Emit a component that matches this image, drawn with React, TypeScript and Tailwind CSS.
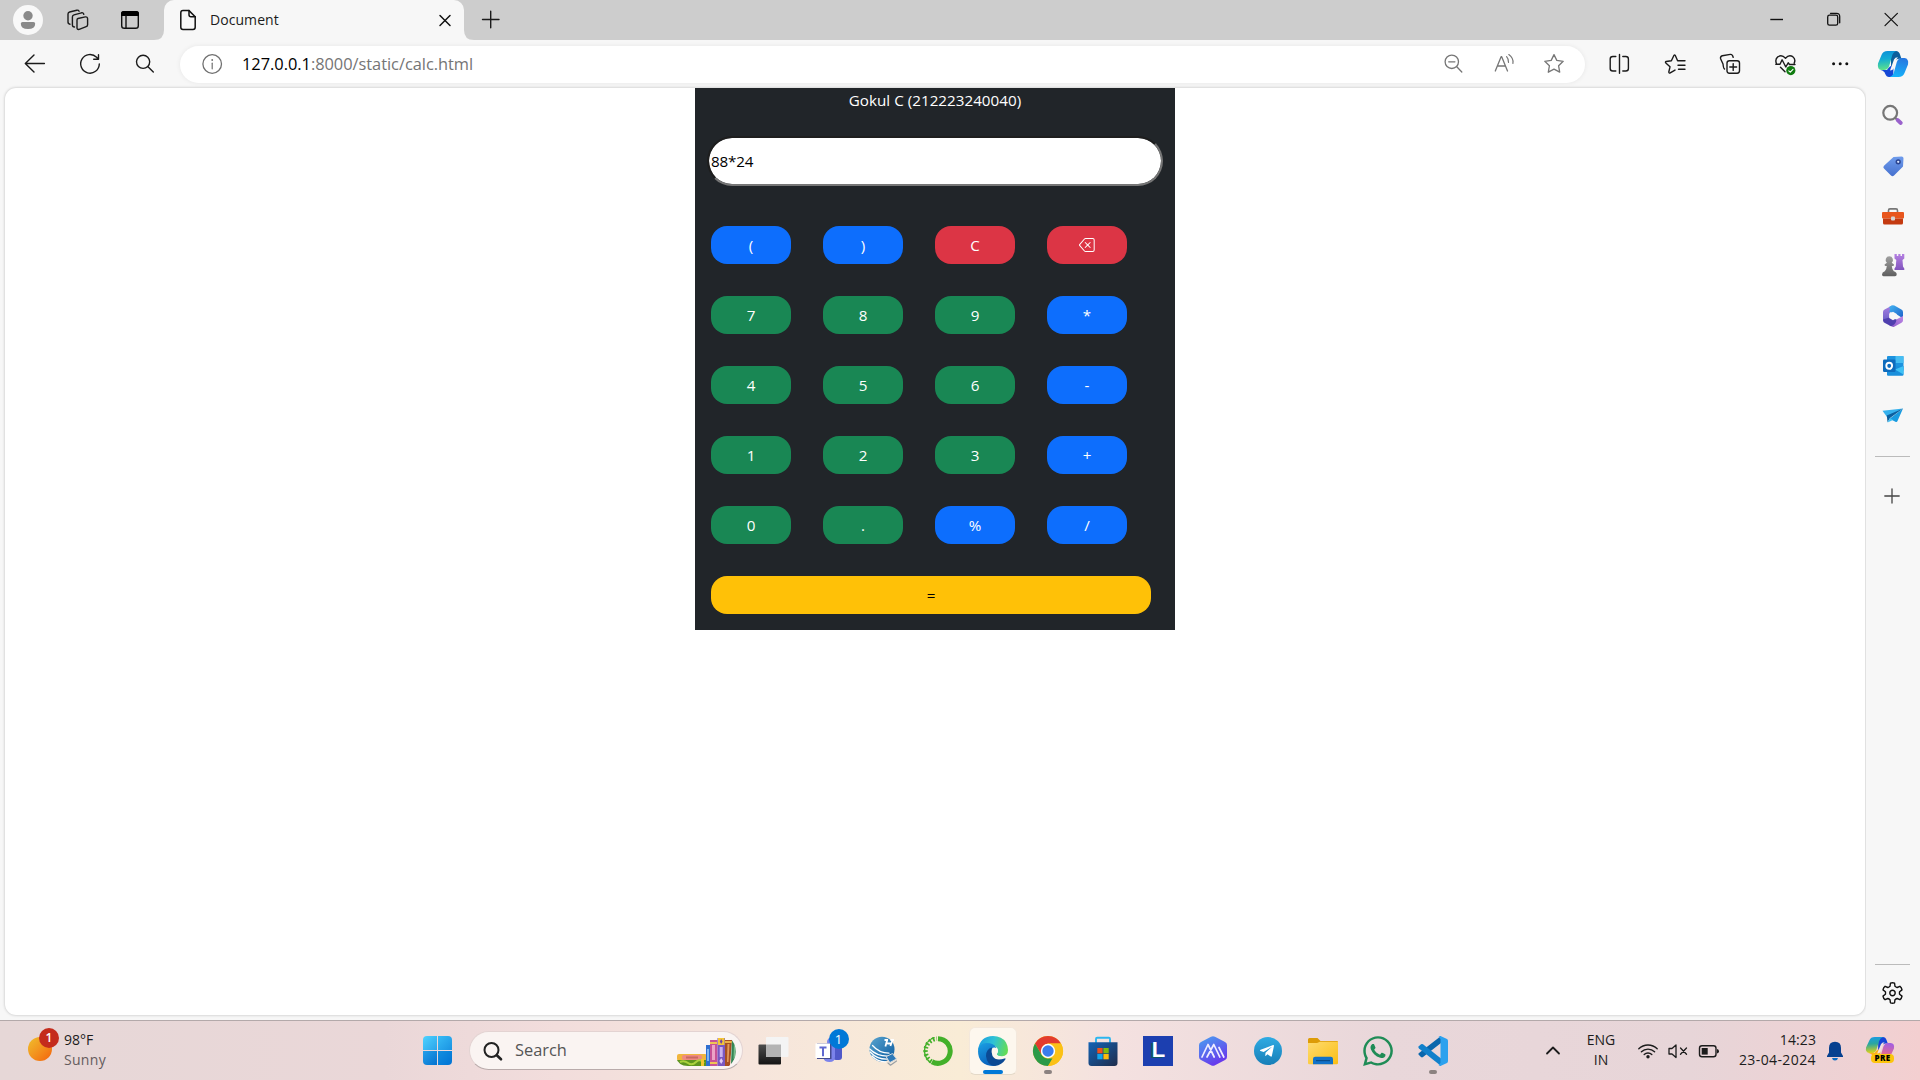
import React from "react";
import { BsBackspace } from "react-icons/bs";
import { FaWhatsapp, FaTelegramPlane } from "react-icons/fa";

const FONT = 'font-["Open_Sans","Noto_Sans",sans-serif]';

/* Square icon canvas whose origin is at the centre of the icon. */
function Ico({ s = 30, children, className = "" }: { s?: number; children: React.ReactNode; className?: string }) {
  return (
    <svg
      width={s}
      height={s}
      viewBox={`${-s / 2} ${-s / 2} ${s} ${s}`}
      fill="none"
      stroke="currentColor"
      strokeWidth={1.4}
      strokeLinecap="round"
      strokeLinejoin="round"
      className={"shrink-0 " + className}
    >
      {children}
    </svg>
  );
}

function Cell({ w, children }: { w: string; children: React.ReactNode }) {
  return <div className={"flex h-full shrink-0 items-center justify-center " + w}>{children}</div>;
}

function TitleBar() {
  return (
    <div className="flex h-10 items-center bg-[#cdcdcd] text-[#1b1b1b]">
      <Cell w="w-14">
        <Ico>
          <circle r="15" fill="#f8f8f8" stroke="none" />
          <circle cy="-4.3" r="4.7" fill="#8a8a8a" stroke="none" />
          <path d="M-5.5 2H5.5Q7.2 2 7.2 3.8Q7.2 9 0 9Q-7.2 9-7.2 3.8Q-7.2 2-5.5 2Z" fill="#8a8a8a" stroke="none" />
        </Ico>
      </Cell>
      <Cell w="w-11">
        <Ico>
          <path d="M0-1.5L7.3-3.1Q9.6-3.5 9.6-1.2V4.7Q9.6 6.2 8.2 6.7L1.2 9.3Q-1 9.9-1 7.7V0Q-1-1.2 0-1.5Z" />
          <path d="M-3.5 7Q-5.6 6.8-5.6 5V-3Q-5.6-4.6-4-5.1L3.5-7.2Q5.4-7.6 5.8-5.6" />
          <path d="M-8 4.2Q-10 4-10 2V-6Q-10-7.6-8.4-8L-1.2-9.8Q.5-10 1.1-8.8" />
        </Ico>
      </Cell>
      <Cell w="w-[60px]">
        <Ico>
          <rect x="-8.3" y="-8.3" width="16.6" height="16.6" rx="2.6" stroke="#111" />
          <path d="M-9-4V-6.4Q-9-9-6.4-9H6.4Q9-9 9-6.4V-4Z" fill="#000" stroke="none" />
          <path d="M-4-4V8" stroke="#111" />
        </Ico>
      </Cell>
      <div className="relative ml-1 flex h-10 w-[300px] items-center rounded-t-[10px] bg-[#f7f7f7]">
        <svg className="absolute bottom-0 -left-[10px]" width="10" height="10">
          <path d="M10 0V10H0Q10 10 10 0Z" fill="#f7f7f7" />
        </svg>
        <svg className="absolute -right-[10px] bottom-0" width="10" height="10">
          <path d="M0 0V10H10Q0 10 0 0Z" fill="#f7f7f7" />
        </svg>
        <div className="ml-[9px] w-[30px]">
          <Ico>
            <path d="M1-9.4H-5Q-7.2-9.4-7.2-7.2V7.2Q-7.2 9.4-5 9.4H5Q7.2 9.4 7.2 7.2V-3.2Z" stroke="#111" strokeWidth="1.5" />
            <path d="M1-9.4V-5.2Q1-3.2 3-3.2H7.2" stroke="#111" strokeWidth="1.5" />
          </Ico>
        </div>
        <span className="ml-[7px] text-[14px] leading-5 tracking-[0.06px]">Document</span>
        <div className="mr-[4.5px] ml-auto">
          <Ico>
            <path d="M-5-4.5L5 5.5M5-4.5L-5 5.5" stroke="#111" strokeWidth="1.5" />
          </Ico>
        </div>
      </div>
      <Cell w="w-[53px]">
        <Ico>
          <path d="M-8.5-.5H8M-.3-8.7V7.8" />
        </Ico>
      </Cell>
      <div className="ml-auto flex h-full text-[#111]">
        <Cell w="w-[57px]">
          <Ico>
            <path d="M-5.7-.5H7" strokeLinecap="butt" />
          </Ico>
        </Cell>
        <Cell w="w-[58px]">
          <Ico>
            <rect x="-5.3" y="-4.8" width="10" height="10" rx="1.8" strokeWidth="1.3" />
            <path d="M-2.5-6.7H3.5Q6.7-6.7 6.7-3.5V2.8" strokeWidth="1.3" />
          </Ico>
        </Cell>
        <Cell w="w-[58px]">
          <Ico>
            <path d="M-6-6.7L6.4 5.7M6.4-6.7L-6 5.7" strokeWidth="1.2" />
          </Ico>
        </Cell>
      </div>
    </div>
  );
}

const STAR = "M0-9.4L2.8-3.6L9.2-2.7L4.6 1.8L5.7 8.2L0 5.2L-5.7 8.2L-4.6 1.8L-9.2-2.7L-2.8-3.6Z";

function CopilotMark({ pre = false }: { pre?: boolean }) {
  const a = pre ? "cpA" : "cpC";
  const b = pre ? "cpB" : "cpD";
  return (
    <>
      <defs>
        <linearGradient id={a} x1="0" y1="0" x2="0.1" y2="1">
          <stop offset="0" stopColor={pre ? "#189be8" : "#0b8fd8"} />
          <stop offset="0.45" stopColor={pre ? "#2aa7a0" : "#12acd4"} />
          <stop offset="1" stopColor={pre ? "#d8d11c" : "#5be08c"} />
        </linearGradient>
        <linearGradient id={b} x1="0.5" y1="0" x2="0.3" y2="1">
          <stop offset="0" stopColor={pre ? "#a45ee0" : "#2678e0"} />
          <stop offset="1" stopColor={pre ? "#ff6f6f" : "#16b4fb"} />
        </linearGradient>
      </defs>
      <g stroke="none">
        <path d="M-2-13H3Q6-13 7-9.5L8.5-5Q3-6.5 1-1L-2 6Z" fill={pre ? "#1644d8" : "#0c5f9c"} />
        <path d="M-6 6H-12.5Q-8.5 7-8 9.5Q-6.5 13-4 13H0Q2-5-6 6Z" fill={pre ? "#ffb21a" : "#1547d6"} />
        <path d="M-5.5-13H3.5Q0-12-1 -8L-3.8 2Q-5.2 6-9 6H-11.5Q-16 5.5-15-.5L-11.5-9Q-10-13-5.5-13Z" fill={`url(#${a})`} />
        <path d="M5.5 13H-3.5Q0 12 1 8L3.8-2Q5.2-6 9-6H11.5Q16-5.5 15 .5L11.5 9Q10 13 5.5 13Z" fill={`url(#${b})`} />
        <path d="M-2.6 5.5L1-4.5Q2-6.8 5-6.8Q3.6-5.5 3-3.5L.5 4.5Q-.2 6.6-3 6.6Z" fill={pre ? "#f3dfe0" : "#f7f7f7"} />
      </g>
    </>
  );
}

function Toolbar() {
  return (
    <div className="flex h-[48px] items-center bg-[#f7f7f7] text-[#1b1b1b]">
      <Cell w="w-[70px]">
        <Ico>
          <path d="M9.4-.5H-9.6M-1-9L-9.7-.5L-1 8" />
        </Ico>
      </Cell>
      <Cell w="w-10">
        <Ico>
          <path d="M9.3 0A9.3 9.3 0 1 1 6.6-6.7L8.5-4.7M8.5-9.3V-4.7H3.7" />
        </Ico>
      </Cell>
      <Cell w="w-[70px]">
        <Ico>
          <circle cx="-1.9" cy="-2.2" r="6.6" />
          <path d="M3 2.7L8.3 8" />
        </Ico>
      </Cell>
      <div className="flex h-[37px] w-[1405px] shrink-0 items-center rounded-full bg-white shadow-[0_0_5px_rgba(0,0,0,0.07)]">
        <div className="flex w-[62px] justify-center text-[#707070]">
          <Ico>
            <circle cx="1.2" r="9.3" strokeWidth="1.3" />
            <path d="M1.2-.8V4.8" strokeWidth="1.2" />
            <circle cx="1.2" cy="-4" r=".9" fill="currentColor" stroke="none" />
          </Ico>
        </div>
        <span className="text-[16.4px] leading-6 tracking-[-0.03px] text-[#757575]">
          <span className="text-black">127.0.0.1</span>:8000/static/calc.html
        </span>
        <div className="mr-1.5 ml-auto flex text-[#767676]">
          <Cell w="w-[50px]">
            <Ico>
              <circle cx="-2.2" cy="-2.2" r="6.7" strokeWidth="1.3" />
              <path d="M2.8 2.8L7.8 8M-5.3-2.2H.9" strokeWidth="1.3" />
            </Ico>
          </Cell>
          <Cell w="w-[50px]">
            <Ico>
              <path d="M-8.7 7L-2.9-7.3H-2.3L3.5 7M-6.6 2H1.4" strokeWidth="1.3" />
              <path d="M2.6-7.4Q4.8-5 4.5-1.6M4.8-9.4Q9.8-5.6 8.9-.7" strokeWidth="1.2" />
            </Ico>
          </Cell>
          <Cell w="w-[50px]">
            <Ico>
              <path d={STAR} strokeWidth="1.3" />
            </Ico>
          </Cell>
        </div>
      </div>
      <div className="ml-1.5 flex h-full flex-1">
        <Cell w="w-14">
          <Ico>
            <path d="M-3.2-7.5H-6.2Q-8.8-7.5-8.8-5V4.5Q-8.8 7-6.2 7H-3.2M3.8-7.5H6.8Q9.4-7.5 9.4-5V4.5Q9.4 7 6.8 7H3.8M.5-9.5V9.2" />
          </Ico>
        </Cell>
        <Cell w="w-[55px]">
          <Ico>
            <path d="M6.2-3.2H2.6L.2-8.7Q-.4-9.6-1-8.7L-3.6-3.2L-8.9-2.5Q-10-2-9.2-1.1L-5 2.8L-6.2 8Q-6 9.5-4.8 8.9L0 6.1M3 1.2H10M4.5-3.2H10M3.5 5.3H10" />
          </Ico>
        </Cell>
        <Cell w="w-[55px]">
          <Ico>
            <rect x="-3" y="-3.3" width="12.5" height="12.5" rx="2.4" />
            <path d="M3.2-.4V6.4M-.2 3H6.6M-5.5 5Q-6.5 4.7-7-.0L-9.4-5.3Q-10-7.6-7.7-8.2L.3-9.6Q2.6-9.8 3.2-6.6" />
          </Ico>
        </Cell>
        <Cell w="w-[55px]">
          <Ico>
            <path d="M-8.6-.6Q-10.2-4.8-7.2-7.1Q-3.3-9.9.5-5.8Q4-9.9 7.8-7.3Q11-4.8 9.2-.9M-9.2.3H-5L-2.9-4.2L.8 3L3.2-1.2L4.5.5H10M-4.5 3.2L0 7.8" />
            <circle cx="5.8" cy="6.6" r="4.6" fill="#107c10" stroke="none" />
            <path d="M3.8 6.8L5.3 8.2L8 5.3" stroke="#fff" strokeWidth="1.1" />
          </Ico>
        </Cell>
        <Cell w="w-[55px]">
          <Ico>
            <g fill="#111" stroke="none">
              <circle cx="-6.4" cy="-.2" r="1.5" />
              <circle cx=".2" cy="-.2" r="1.5" />
              <circle cx="6.8" cy="-.2" r="1.5" />
            </g>
          </Ico>
        </Cell>
        <Cell w="w-[52px]">
          <Ico s={32}>
            <CopilotMark />
          </Ico>
        </Cell>
      </div>
    </div>
  );
}

const KEYS: [string, "b" | "g" | "r"][] = [
  ["(", "b"], [")", "b"], ["C", "r"], ["back", "r"],
  ["7", "g"], ["8", "g"], ["9", "g"], ["*", "b"],
  ["4", "g"], ["5", "g"], ["6", "g"], ["-", "b"],
  ["1", "g"], ["2", "g"], ["3", "g"], ["+", "b"],
  ["0", "g"], [".", "g"], ["%", "b"], ["/", "b"],
];
const KEY_BG = { b: "bg-[#0d6efd]", g: "bg-[#198754]", r: "bg-[#dc3545]" };

function Calculator() {
  return (
    <div className="flex h-[542px] w-[480px] flex-col bg-[#212529] text-[15.2px] text-white">
      <div className="text-center leading-6 tracking-[0.02px]">Gokul C (212223240040)</div>
      <div className="mt-6 ml-3 flex h-[50px] w-[456px] items-center rounded-[25px] border-2 border-t-[#1e1e1e] border-r-[#767676] border-b-[#767676] border-l-[#1e1e1e] bg-white bg-clip-padding pt-px pl-0.5 tracking-[-0.15px] text-black">
        88*24
      </div>
      <div className="mt-10 ml-4 grid w-[416px] grid-cols-4 gap-8">
        {KEYS.map(([k, c]) => (
          <button key={k} className={"flex h-[38px] w-20 items-center justify-center rounded-2xl pb-px leading-6 " + KEY_BG[c]}>
            {k === "back" ? <BsBackspace size={16} /> : k}
          </button>
        ))}
      </div>
      <button className="mt-8 ml-4 flex h-[38px] w-[440px] items-center justify-center rounded-2xl bg-[#ffc107] text-black">=</button>
    </div>
  );
}

const GEAR =
  [0, 1, 2, 3, 4, 5]
    .map((k) => {
      const pt = (deg: number, r: number) => {
        const a = ((k * 60 - 90 + deg) * Math.PI) / 180;
        return `${(r * Math.cos(a)).toFixed(2)} ${(r * Math.sin(a)).toFixed(2)}`;
      };
      return `${k ? "L" : "M"}${pt(-20, 7.2)}L${pt(-12, 10)}Q${pt(0, 10.6)} ${pt(12, 10)}L${pt(20, 7.2)}Q${pt(30, 6.8)} ${pt(40, 7.2)}`;
    })
    .join("") + "Z";

function Sidebar() {
  return (
    <div className="flex w-[54px] flex-col items-center bg-[#f7f7f7] text-[#444]">
      <div className="flex h-[50px] items-center pt-[4px]">
        <Ico>
          <circle cx="-2.8" cy="-2.2" r="6.9" stroke="#767676" strokeWidth="2.2" />
          <path d="M2.2 2.8L4.4 5" stroke="#767676" strokeWidth="2.2" />
          <path d="M4.6 5L7.8 8" stroke="#9a62cc" strokeWidth="3.8" />
        </Ico>
      </div>
      <div className="flex h-[50px] items-center pt-[5px]">
        <Ico>
          <defs>
            <linearGradient id="tag" x1="0" y1="0" x2="0" y2="1">
              <stop stopColor="#6f9cec" />
              <stop offset="1" stopColor="#4671cf" />
            </linearGradient>
          </defs>
          <path d="M.5-9L8.6-9.5Q10.5-9.5 10.5-7.7L10 .5L1 9.5Q-.5 10.9-2 9.5L-9 2.5Q-10.4 1.1-9-.3Z" fill="url(#tag)" stroke="none" />
          <circle cx="5.2" cy="-4.2" r="1.9" fill="#d6e4ff" stroke="#2c4591" strokeWidth="1.5" />
        </Ico>
      </div>
      <div className="flex h-[50px] items-center pt-[6px]">
        <Ico>
          <path d="M-4.5-3.5V-5.5Q-4.5-7.1-3-7.1H3Q4.5-7.1 4.5-5.5V-3.5" stroke="#777" strokeWidth="1.6" />
          <rect x="-11" y="-4" width="22" height="6.5" rx="1" fill="#e8561d" stroke="none" />
          <path d="M-10 2.5H10V7Q10 8.5 8.5 8.5H-8.5Q-10 8.5-10 7Z" fill="#c43a10" stroke="none" />
          <rect x="-2" y=".5" width="4" height="4" rx="1" fill="#d5d5d5" stroke="none" />
        </Ico>
      </div>
      <div className="flex h-[50px] items-center pt-[6px]">
        <Ico>
          <defs>
            <linearGradient id="pawn" x1="0" y1="0" x2="0" y2="1">
              <stop stopColor="#a0a0a0" />
              <stop offset="1" stopColor="#5f5f5f" />
            </linearGradient>
            <linearGradient id="rook" x1="0" y1="0" x2="0" y2="1">
              <stop stopColor="#b580e2" />
              <stop offset="1" stopColor="#8155bd" />
            </linearGradient>
          </defs>
          <g stroke="none">
            <path
              d="M1.5-12H3.8V-10H5.3V-12H7.5V-10H9V-12H11.3V-7.5L9.5-6L10 .5L11.3 2.5V4H1.5V2.5L2.8.5L3.3-6L1.5-7.5Z"
              fill="url(#rook)"
            />
            <path
              d="M-3.7-9.7A3.7 3.7 0 0 1-1.3-3.2L1-1.5Q1.3-.3 0 0H-1.2Q-1 3.5.8 5.3Q3.7 6 3.7 8.5Q3.7 10.3 2 10.3H-9.5Q-11 10.3-11 8.5Q-11 6-8.2 5.3Q-6.4 3.5-6.2 0H-7.4Q-8.7-.3-8.4-1.5L-6.1-3.2A3.7 3.7 0 0 1-3.7-9.7Z"
              fill="url(#pawn)"
            />
          </g>
        </Ico>
      </div>
      <div className="flex h-[50px] items-center pt-[5px]">
        <Ico>
          <defs>
            <linearGradient id="m1" x1="0" y1="0" x2="0" y2="1">
              <stop stopColor="#a97fe0" />
              <stop offset="1" stopColor="#6b5fc8" />
            </linearGradient>
            <linearGradient id="m2" x1="0" y1="0" x2="1" y2="1">
              <stop stopColor="#43b5f2" />
              <stop offset="1" stopColor="#1d5fc8" />
            </linearGradient>
            <linearGradient id="m3" x1="0" y1="1" x2="1" y2="0">
              <stop stopColor="#8a58c8" />
              <stop offset="1" stopColor="#c08ae6" />
            </linearGradient>
          </defs>
          <g stroke="none">
            <path d="M-1-10.6L-8.4-6.5Q-10-5.6-10-4V5L-3.5 2V-3L2-7Z" fill="url(#m1)" />
            <path d="M-4-9L-1.3-10.6Q0-11.2 1.4-10.4L8.4-6.5Q10-5.6 10-4V2.5L3.5-1.8L-4-4.5Q-2-7-4-9Z" fill="url(#m2)" />
            <path d="M10 0V4.5Q10 6 8.5 6.8L1.2 10.7Q0 11.2-1.2 10.6L-4 9L3.8 3.2Z" fill="url(#m3)" />
            <path d="M-10 3.5Q-10 6-8.5 6.8L-2 10.3Q3 8.5 3.5 3.5L-3.8 1.5Z" fill="#4f3fae" />
            <path d="M-3.8-2.1L0-4.3L3.8-2.1V2.1L0 4.3L-3.8 2.1Z" fill="#f7f7f7" />
          </g>
        </Ico>
      </div>
      <div className="flex h-[50px] items-center pt-[5px]">
        <Ico>
          <g stroke="none">
            <rect x="-6" y="-10" width="16.5" height="15" rx="1" fill="#1c93df" />
            <rect x="2.5" y="-10" width="8" height="7" fill="#46bdf2" />
            <path d="M-6 0L10.5 0V8.5Q10.5 9.7 9.3 9.7H-5Q-6 9.7-6 8.5Z" fill="#1a8fdc" />
            <path d="M10.5 0V8.5L2 3.5Z" fill="#3fc2f5" />
            <rect x="-10" y="-6.5" width="12.5" height="12.5" rx="1.2" fill="#0f6cbd" />
          </g>
          <ellipse cx="-3.8" cy="-.2" rx="2.9" ry="3.1" stroke="#fff" strokeWidth="1.9" />
        </Ico>
      </div>
      <div className="flex h-[50px] items-center pt-[6px]">
        <Ico>
          <g stroke="none">
            <path d="M-10.5-5.2L10-7.5L-6 1Z" fill="#35b1ed" />
            <path d="M10-7.5L4.5 5Q4 6.5 2.4 5.8L-3.4 2.8Z" fill="#189be0" />
            <path d="M10-7.5L-6.2-.5L-5.5 6.3L-3 2Z" fill="#0b5f9f" />
            <path d="M-5.5 6.5L-3 2L0 4Z" fill="#3cc0f5" />
          </g>
        </Ico>
      </div>
      <div className="mt-[18px] ml-[-1px] h-px w-[35px] bg-[#bbb]" />
      <div className="mt-[24px]">
        <Ico>
          <path d="M-8.2 0H6.2M-1-7.2V7" strokeWidth="1.3" />
        </Ico>
      </div>
      <div className="mt-auto ml-[-1px] h-px w-[35px] bg-[#bbb]" />
      <div className="mt-[13px] mb-[12px] text-[#111]">
        <Ico className="-translate-x-[0.5px]">
          <path d={GEAR} />
          <circle r="2.7" />
        </Ico>
      </div>
    </div>
  );
}

function Books() {
  return (
    <svg width="64" height="30" viewBox="0 0 64 30" className="absolute right-[2px] bottom-[2px]">
      <clipPath id="books">
        <path d="M0 0H53A19 19 0 0 1 53 29H12Q2 29 0 20Z" />
      </clipPath>
      <g clipPath="url(#books)">
        <rect x="1" y="17" width="30" height="7" rx="2" fill="#f1b53d" />
        <rect x="6" y="18" width="20" height="5" rx="2" fill="#ef8b80" />
        <rect x="10" y="19.5" width="12" height="2" fill="#c96a63" />
        <rect x="1" y="23" width="31" height="6" fill="#5d9420" />
        <path d="M4 25Q8 23 12 26T20 25T28 26" stroke="#a9d13e" strokeWidth="2" fill="none" />
        <rect x="25" y="22" width="3" height="7" fill="#f4c531" />
        <rect x="30" y="8" width="4" height="21" fill="#2f6fd0" />
        <rect x="31" y="12" width="2" height="12" fill="#7fb5f0" />
        <rect x="34" y="3" width="7.5" height="26" fill="#c75295" />
        <rect x="36" y="8" width="3" height="15" fill="#eda3c6" />
        <rect x="34" y="5" width="7.5" height="2" fill="#f0c452" />
        <rect x="34" y="25" width="7.5" height="2" fill="#f0c452" />
        <rect x="41.5" y="1" width="7.5" height="28" fill="#7a58c1" />
        <rect x="42" y="1" width="6.5" height="7" fill="#f4c534" />
        <path d="M45.2 2L46.6 4.5L45.2 7L43.8 4.5Z" fill="#7342a5" />
        <rect x="43.7" y="10" width="3" height="10" fill="#c9b1ef" />
        <path d="M45.2 21L47 24L45.2 27L43.4 24Z" fill="#e2cbf7" />
        <path d="M49 3H56L54 29H49Z" fill="#a64e22" />
        <path d="M51.5 7H53.5L52.5 25H51Z" fill="#e39b5a" />
        <rect x="49" y="4" width="7" height="2" fill="#e9b146" />
        <path d="M56 1L63 3V25L55 27Z" fill="#338554" />
        <path d="M58 6L60 7L59 21L57.5 22Z" fill="#79bd8c" />
      </g>
    </svg>
  );
}

function AppIcon({ name }: { name: string }) {
  switch (name) {
    case "taskview":
      return (
        <Ico s={34}>
          <defs>
            <linearGradient id="tv" x1="0" y1="0" x2="0" y2="1">
              <stop stopColor="#4d4d4d" />
              <stop offset="1" stopColor="#141414" />
            </linearGradient>
          </defs>
          <rect x="-14.5" y="-6.5" width="22.5" height="20" rx="1" fill="url(#tv)" stroke="none" />
          <rect x="-7" y="-14" width="22.5" height="20" rx="1" fill="#f4f4f4" stroke="none" />
          <rect x="-7" y="-6.5" width="15" height="12.5" fill="#b3b3b3" stroke="none" />
        </Ico>
      );
    case "teams":
      return (
        <div className="relative">
          <Ico s={34}>
            <g stroke="none">
              <circle cx="3.5" cy="-9" r="4.5" fill="#7b83eb" />
              <rect x="5" y="-5" width="9" height="14" rx="3" fill="#5059c9" />
              <path d="M-5-5H7V6Q7 11 1.5 11Q-4 11-4.5 7Z" fill="#7b83eb" />
              <rect x="-11" y="-7.5" width="14.5" height="15.5" fill="#444b8e" />
              <rect x="-12.5" y="-7.5" width="14.5" height="14.5" fill="#fff" />
              <path d="M-8.5-4.5H-1.5V-2.5H-4V5.3H-6V-2.5H-8.5Z" fill="#6068d0" />
            </g>
          </Ico>
          <div className="absolute -top-[5px] left-[18px] flex h-5 w-5 items-center justify-center rounded-full bg-[#0078d7] text-[13px] leading-5 text-white">
            1
          </div>
        </div>
      );
    case "globe":
      return (
        <Ico>
          <defs>
            <linearGradient id="gl" x1="0" y1="0" x2="1" y2="1">
              <stop stopColor="#5aa5cf" />
              <stop offset="1" stopColor="#0b5ba0" />
            </linearGradient>
          </defs>
          <circle cx="-1" cy="-1.8" r="12.5" fill="url(#gl)" stroke="none" />
          <path d="M-13.3-2Q-6 5.5 6 5M-12.8 1Q-6 8.5 4.5 8.2M-11 5Q-5 11 2.5 10.8M-10.5-5.5Q-4 2 6 2.2" stroke="#fff" strokeWidth="1.2" />
          <path d="M4.2-11L2.4-4.5M9.6-11L7.4-5M1.5-11H5M7.4-11H11M4.2-7.5L8-7.7" stroke="#fff" strokeWidth="1.8" strokeLinecap="butt" />
          <path d="M3.5 5.5L9.5 2.5L13.5 8L7 11.5Z" fill="#2f7ab8" stroke="#d5d9dc" strokeWidth="1" />
          <path d="M5 12L7.5 14.2L13.5 10" stroke="#9aa0a5" strokeWidth="1.2" />
        </Ico>
      );
    case "anaconda":
      return (
        <Ico s={32}>
          <path d="M0-12.3A12.3 12.3 0 1 1-6 10.8" stroke="#43b02a" strokeWidth="5" strokeLinecap="butt" />
          <path d="M-6.5 10.5A12.3 12.3 0 0 1-1-12.3" stroke="#43b02a" strokeWidth="4.5" strokeDasharray="1.8 2" strokeLinecap="butt" />
          <path d="M-8 11A14 14 0 0 1-3-13.6" stroke="#43b02a" strokeWidth="1.4" strokeDasharray="3 1.5" />
        </Ico>
      );
    case "edge":
      return (
        <Ico s={32}>
          <defs>
            <linearGradient id="e1" x1="0" y1="0.3" x2="1" y2="0.5">
              <stop stopColor="#1b9de2" />
              <stop offset="0.5" stopColor="#2fc2d5" />
              <stop offset="1" stopColor="#64dc55" />
            </linearGradient>
            <linearGradient id="e2" x1="0" y1="0" x2="0.4" y2="1">
              <stop stopColor="#1ba0e4" />
              <stop offset="1" stopColor="#0a63bd" />
            </linearGradient>
          </defs>
          <g stroke="none">
            <path d="M-15-1Q-13-15 0-15Q9-15 13-8.5Q15-5 15-1Q15 5 9 5.2Q4 5.2 3.8 3.3Q5.5 1.5 5-1Q4-5 0-5Q-6-5-15-1Z" fill="url(#e1)" />
            <path d="M-15 0Q-14-8-6.5-8Q1-8 3.5-3Q-4-4-4.5 3.5Q-4.5 9.5 1 13Q2.5 14.5 1 15Q-15 14.5-15 0Z" fill="url(#e2)" />
            <path d="M-1-3.5Q-7-2-7 5Q-6 14.5 2 15Q9 14 12.5 8.3Q12.8 7 11.5 7.4Q3 10.5-.5 5Q-2 1-1-3.5Z" fill="#0c4a94" />
            <path d="M-.2-3.2Q4-4.5 5-.8Q5 1.5 3.8 3Q4 5.5 8 5.5Q1 7.5-1 2Q-1.7-1-.2-3.2Z" fill="#fdf7ee" />
          </g>
        </Ico>
      );
    case "chrome":
      return (
        <Ico s={32}>
          <g stroke="none">
            <circle r="15" fill="#fbc116" />
            <path d="M-13-7.5A15 15 0 0 1 13-7.5H0Q-7-7-6.5 3.7Z" fill="#e33b2e" />
            <path d="M-13-7.5L-6.5 3.7Q-3 8 0 7.5H6.5L0 15A15 15 0 0 1-13-7.5Z" fill="#2b9a48" />
            <path d="M6.5 3.7L0 15A15 15 0 0 0 13-7.5H0Z" fill="#fbc116" />
            <circle r="7.2" fill="#fff" />
            <circle r="5.7" fill="#3b7ded" />
          </g>
        </Ico>
      );
    case "store":
      return (
        <Ico s={32}>
          <defs>
            <linearGradient id="st" x1="0" y1="0" x2="1" y2="1">
              <stop stopColor="#1263b5" />
              <stop offset="1" stopColor="#202d4c" />
            </linearGradient>
          </defs>
          <path d="M-7-8V-12Q-7-13.2-5.8-13.2H5.8Q7-13.2 7-12V-8" stroke="#2cb6ef" strokeWidth="1.9" />
          <path d="M-14.5-8.8H14.5V12Q14.5 15 11.5 15H-11.5Q-14.5 15-14.5 12Z" fill="url(#st)" stroke="none" />
          <g stroke="none">
            <rect x="-5.7" y="-3" width="5.3" height="5.3" fill="#f1511b" />
            <rect x=".4" y="-3" width="5.3" height="5.3" fill="#80bb0b" />
            <rect x="-5.7" y="3" width="5.3" height="5.3" fill="#11a5ec" />
            <rect x=".4" y="3" width="5.3" height="5.3" fill="#fdb90b" />
          </g>
        </Ico>
      );
    case "l":
      return (
        <div className="flex h-[30px] w-[30px] items-center justify-center bg-[#1c3fb0] pb-0.5 pl-0.5 font-['Liberation_Sans',sans-serif] text-[22px] leading-none font-bold text-white [text-shadow:-2px_1px_0_#0c5568]">
          L
        </div>
      );
    case "ai":
      return (
        <Ico s={32}>
          <defs>
            <linearGradient id="ai" x1="0.2" y1="0" x2="0.7" y2="1">
              <stop stopColor="#4c9bf0" />
              <stop offset="1" stopColor="#6a31ec" />
            </linearGradient>
          </defs>
          <path d="M-2-14.2Q0-15.4 2-14.2L12-9Q14-8 14-6V6Q14 8 12 9L2 14.2Q0 15.4-2 14.2L-12 9Q-14 8-14 6V-6Q-14-8-12-9Z" fill="url(#ai)" stroke="none" />
          <path d="M-11 6L-5-6.5L1.2 6M-6 6L.8-6.5L6.8 6M6-3.5L10.8 6" stroke="#f0edff" strokeWidth="1.7" />
        </Ico>
      );
    case "telegram":
      return (
        <div className="flex h-7 w-7 items-center justify-center rounded-full bg-gradient-to-b from-[#2fabe3] to-[#177fb8]">
          <FaTelegramPlane className="mt-px -ml-px h-4 w-4 text-white" />
        </div>
      );
    case "folder":
      return (
        <Ico s={32}>
          <defs>
            <linearGradient id="fo" x1="0" y1="0" x2="1" y2="1">
              <stop stopColor="#fedb70" />
              <stop offset="1" stopColor="#fbbe14" />
            </linearGradient>
          </defs>
          <g stroke="none">
            <path d="M-15-11.5Q-15-13-13.5-13H-5.5L-2.5-10H14Q15-10 15-9V0H-15Z" fill="#dd9c07" />
            <path d="M-15-8H-6L-3-9.3H15V12Q15 13.3 13.7 13.3H-13.7Q-15 13.3-15 12Z" fill="url(#fo)" />
            <path d="M-10 13.3V8Q-10 5.7-7.7 5.7H7.7Q10 5.7 10 8V13.3Z" fill="#1272c9" />
            <rect x="-7" y="9" width="14" height="1.2" fill="#084d8b" />
          </g>
        </Ico>
      );
    case "whatsapp":
      return <FaWhatsapp className="h-[34px] w-[34px] text-[#1f8c56]" />;
    default:
      return (
        <Ico s={32}>
          <g stroke="none">
            <path d="M-14.5 3.5L-12 6Q-11 6.8-10 6L8-8V-15L-14 2Q-15 2.8-14.5 3.5Z" fill="#0a66ac" />
            <path d="M-14.5-4.5L-12-6.7Q-11-7.3-10-6.7L8 7.5V15L-14-2.5Q-15-3.5-14.5-4.5Z" fill="#1180cb" />
            <path d="M7.5-15L14-12Q15-11.3 15-10V10Q15 11.3 14 12L7.5 15Q6.5 15 5.5 14L7.5 12V-12L5.5-14Q6.5-15 7.5-15Z" fill="#2ca1ee" />
          </g>
        </Ico>
      );
  }
}

const APPS = ["taskview", "teams", "globe", "anaconda", "edge", "chrome", "store", "l", "ai", "telegram", "folder", "whatsapp", "vscode"];

function Taskbar() {
  return (
    <div className="flex h-[60px] items-center border-t border-[#b3a9aa] bg-[linear-gradient(90deg,#e6d7d7_0%,#ead7d8_20%,#f2dddc_29%,#f6e5dc_39%,#f9ecd6_50%,#f4e1e0_58%,#e9d7da_72%,#e7d5d8_88%,#efd1d3_97%,#f3cfd0_100%)] text-[14px] text-[#1c1c1c]">
      <div className="flex w-[420px] shrink-0 items-center pl-7">
        <div className="relative h-6 w-6 translate-y-[-2px]">
          <div className="h-6 w-6 rounded-full bg-gradient-to-br from-[#eebf2d] to-[#f2600b]" />
          <div className="absolute -top-[9px] left-[11px] flex h-5 w-5 items-center justify-center rounded-full bg-[#c42b1c] text-[12px] font-semibold text-white">
            1
          </div>
        </div>
        <div className="ml-3 pb-0.5 leading-5">
          <div>98°F</div>
          <div className="tracking-[0.3px] text-[#655c5d]">Sunny</div>
        </div>
      </div>
      <div className="ml-[3px] grid h-[29px] w-[29px] grid-cols-2 gap-px">
        <div className="rounded-tl-sm bg-gradient-to-br from-[#4ed3ff] to-[#2aa4ea]" />
        <div className="rounded-tr-sm bg-gradient-to-br from-[#37bbf5] to-[#1a93e2]" />
        <div className="rounded-bl-sm bg-gradient-to-br from-[#24a0ea] to-[#0472cf]" />
        <div className="rounded-br-sm bg-gradient-to-br from-[#138fe0] to-[#0273d4]" />
      </div>
      <div className="relative ml-[17px] flex h-[39px] w-[274px] items-center rounded-full border border-[#e3d3d2] border-b-[#b9abab] bg-[#faf4f2]">
        <div className="ml-[7px]">
          <Ico>
            <circle cx="-.5" cy="-1" r="7" stroke="#222" strokeWidth="2" />
            <path d="M4.8 4.2L9 8.3" stroke="#222" strokeWidth="2.6" />
          </Ico>
        </div>
        <span className="ml-[8px] text-[16.4px] text-[#555]">Search</span>
        <Books />
      </div>
      <div className="ml-[2px] flex h-full">
        {APPS.map((a) => (
          <div key={a} className="relative flex h-full w-[55px] items-center justify-center">
            <div
              className={
                "flex h-12 w-12 items-center justify-center rounded-md " +
                (a === "edge" ? "border border-[#f3e8dc] border-b-[#e4d9c8] bg-[#fdf7ee]" : "")
              }
            >
              <AppIcon name={a} />
            </div>
            {a === "edge" && <div className="absolute bottom-[6px] h-1 w-5 rounded-full bg-[#0078d7]" />}
            {(a === "chrome" || a === "vscode") && <div className="absolute bottom-[6px] h-1 w-2 rounded-full bg-[#8c8280]" />}
          </div>
        ))}
      </div>
      <div className="ml-auto flex h-full items-center">
        <Cell w="w-[46px]">
          <Ico>
            <path d="M-6 2.5L0-3.5L6 2.5" strokeWidth="1.8" />
          </Ico>
        </Cell>
        <div className="w-[50px] pb-px text-center leading-5">
          ENG
          <br />
          IN
        </div>
        <div className="ml-[7px] flex items-center">
          <Ico>
            <path d="M-9.2-2.2A13 13 0 0 1 9.2-2.2M-6.6.8A9.4 9.4 0 0 1 6.6.8M-3.8 3.6A5.4 5.4 0 0 1 3.8 3.6" />
            <circle cy="5.7" r="1.7" fill="currentColor" stroke="none" />
          </Ico>
          <Ico>
            <path d="M-9-2.5H-6L-2-6V6.5L-6 3H-9Z" strokeWidth="1.3" />
            <path d="M2.5-3L8.5 3.3M8.5-3L2.5 3.3" strokeWidth="1.3" />
          </Ico>
          <Ico>
            <rect x="-8.5" y="-5.3" width="16.5" height="11" rx="2.5" />
            <rect x="-6.3" y="-3" width="6" height="6.6" fill="currentColor" stroke="none" />
            <path d="M9-2Q11-1.8 11 .2T9 2.4Z" fill="currentColor" stroke="none" />
          </Ico>
        </div>
        <div className="w-[93px] pb-0.5 text-right leading-5">
          <div className="tracking-[0.1px]">14:23</div>
          <div className="tracking-[0.4px]">23-04-2024</div>
        </div>
        <Cell w="w-[38px]">
          <Ico>
            <path d="M0-9.2Q6-9.2 6-3V1.5L8 5V6H-8V5L-6 1.5V-3Q-6-9.2 0-9.2Z" fill="#06408f" stroke="none" />
            <path d="M-3 7H3Q2.5 9.5 0 9.5T-3 7Z" fill="#0a6cc4" stroke="none" />
          </Ico>
        </Cell>
        <div className="relative mr-[24px] ml-[10px]">
          <Ico className="-translate-y-[3px] scale-[0.93]" s={32}>
            <g transform="scale(1 .9)">
              <CopilotMark pre />
            </g>
          </Ico>
          <div className="absolute top-[19px] left-[7px] flex h-[9px] w-[23px] items-center justify-center rounded-sm bg-[#fdc50c] text-[8px] leading-none font-extrabold tracking-[0.3px] text-black">
            PRE
          </div>
        </div>
      </div>
    </div>
  );
}

export default function App() {
  return (
    <div className={"flex h-[1080px] w-[1920px] flex-col overflow-hidden bg-[#f7f7f7] " + FONT}>
      <TitleBar />
      <Toolbar />
      <div className="flex h-[932px]">
        <div className="mb-[5px] ml-[5px] flex w-[1860px] justify-center overflow-hidden rounded-[11px] bg-white shadow-[0_0_3px_rgba(0,0,0,0.25)]">
          <Calculator />
        </div>
        <div className="ml-px flex">
          <Sidebar />
        </div>
      </div>
      <Taskbar />
    </div>
  );
}
